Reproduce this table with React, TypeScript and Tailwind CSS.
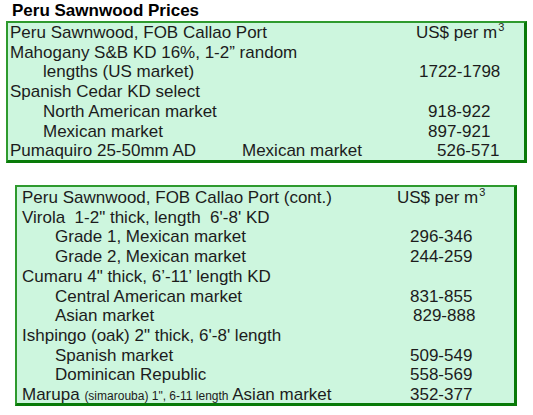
import React from "react";

const font = { fontFamily: '"Liberation Sans", Arial, sans-serif' };

function M3() {
  return (
    <span>
      US$ per m<span className="text-[11px] relative -top-[7px] ml-[1px]">3</span>
    </span>
  );
}

type Row = { left: React.ReactNode; indent?: boolean; right?: React.ReactNode; rpad?: number };

function Line({ left, indent, right, rpad, leftW, indentPx }: Row & { leftW: number; indentPx: number }) {
  return (
    <div className="flex h-[19.7px] items-center whitespace-pre">
      <div className="shrink-0" style={{ width: leftW, paddingLeft: indent ? indentPx : 0 }}>
        {left}
      </div>
      <div style={{ paddingLeft: rpad ?? 0 }}>{right}</div>
    </div>
  );
}

export default function App() {
  const rows1: Row[] = [
    { left: "Peru Sawnwood, FOB Callao Port", right: <M3 />, rpad: 9 },
    { left: "Mahogany S&B KD 16%, 1-2\u201d random" },
    { left: "lengths (US market)", indent: true, right: "1722-1798", rpad: 12 },
    { left: "Spanish Cedar KD select" },
    { left: "North American market", indent: true, right: "918-922", rpad: 21 },
    { left: "Mexican market", indent: true, right: "897-921", rpad: 21 },
    {
      left: (
        <div className="flex">
          <span className="w-[232px]">Pumaquiro 25-50mm AD</span>
          <span>Mexican market</span>
        </div>
      ),
      right: "526-571",
      rpad: 30,
    },
  ];
  const rows2: Row[] = [
    { left: "Peru Sawnwood, FOB Callao Port (cont.)", right: <M3 />, rpad: 0 },
    { left: "Virola  1-2\" thick, length  6'-8' KD" },
    { left: "Grade 1, Mexican market", indent: true, right: "296-346", rpad: 13 },
    { left: "Grade 2, Mexican market", indent: true, right: "244-259", rpad: 13 },
    { left: "Cumaru 4\" thick, 6\u2019-11\u2019 length KD" },
    { left: "Central American market", indent: true, right: "831-855", rpad: 13 },
    { left: "Asian market", indent: true, right: "829-888", rpad: 16 },
    { left: "Ishpingo (oak) 2\" thick, 6'-8' length" },
    { left: "Spanish market", indent: true, right: "509-549", rpad: 13 },
    { left: "Dominican Republic", indent: true, right: "558-569", rpad: 13 },
    {
      left: (
        <span>
          Marupa <span className="text-[12px]">(simarouba) 1", 6-11 length</span> Asian market
        </span>
      ),
      right: "352-377",
      rpad: 13,
    },
  ];

  return (
    <div className="w-[533px] h-[415px] bg-white text-[17px] text-[#1c1c1c]" style={font}>
      <div className="h-[21px] pl-[12px] font-bold leading-[21px] text-black">Peru Sawnwood Prices</div>
      <div className="ml-[6px] w-[521px] h-[142px] bg-[#cdf6de] border-l-2 border-t-2 border-[#2e9a2e] border-r-[3px] border-b-[3px] border-r-[#087a08] border-b-[#087a08] pl-[2px] pt-[0px]">
        {rows1.map((r, i) => (
          <Line key={i} {...r} leftW={397} indentPx={33} />
        ))}
      </div>
      <div className="mt-[22px] ml-[15px] w-[502px] h-[221px] bg-[#cdf6de] border-l-2 border-t-2 border-[#2e9a2e] border-r-[3px] border-b-[3px] border-r-[#087a08] border-b-[#087a08] pl-[5px] pt-[1px]">
        {rows2.map((r, i) => (
          <Line key={i} {...r} leftW={375} indentPx={33} />
        ))}
      </div>
    </div>
  );
}
